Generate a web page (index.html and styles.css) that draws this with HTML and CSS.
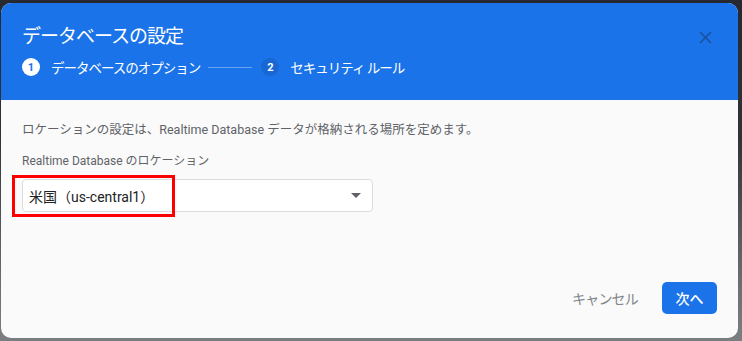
FILE: index.html
```html
<!doctype html>
<html lang="ja">

<head>
  <meta charset="utf-8">
  <meta name="viewport" content="width=device-width, initial-scale=1.0">
  <title>データベースの設定</title>
  <link rel="stylesheet" href="styles.css">
</head>

<body>
  <div class="backdrop-title">Realtime Database</div>

  <div class="dialog">
    <div class="header">
      <div class="title-row">
        <h1>データベースの設定</h1>
        <button class="close" aria-label="閉じる">
          <svg width="13" height="13" viewBox="0 0 13 13">
            <path d="M1 1 L12 12 M12 1 L1 12" stroke="#1a4f9c" stroke-width="1.5" fill="none"/>
          </svg>
        </button>
      </div>
      <div class="stepper">
        <span class="step-num active">1</span>
        <span class="step-label">データベースのオプション</span>
        <span class="step-line"></span>
        <span class="step-num">2</span>
        <span class="step-label">セキュリティ ルール</span>
      </div>
    </div>

    <div class="content">
      <p class="desc">ロケーションの設定は、Realtime Database データが格納される場所を定めます。</p>
      <label class="field-label">Realtime Database のロケーション</label>
      <div class="select">
        <span class="select-value">米国（us-central1）</span>
        <span class="arrow"></span>
        <span class="highlight"></span>
      </div>
    </div>

    <div class="actions">
      <button class="button flat">キャンセル</button>
      <button class="button primary">次へ</button>
    </div>
  </div>
</body>
</html>
```

FILE: styles.css
```css
html {
  font-family: Roboto, "Noto Sans CJK JP", sans-serif;
}

body {
  margin: 0;
  width: 742px;
  height: 341px;
  overflow: hidden;
  background: linear-gradient(#262a30 0, #2f3338 40%, #6e7174 85%, #7b7e81 100%);
  position: relative;
  padding: 3px 4px 3px 1px;
  box-sizing: border-box;
}

.backdrop-title {
  position: absolute;
  left: 138px;
  top: -33px;
  font-size: 36px;
  color: #9aa0a6;
  font-weight: 500;
}

.dialog {
  position: relative;
  height: 335px;
  background-color: #fafafa;
  border-radius: 10px;
  overflow: hidden;
  display: flex;
  flex-direction: column;
}

.header {
  background-color: #1a73e8;
  height: 97px;
  padding: 0 21px;
  box-sizing: border-box;
  color: white;
}

.title-row {
  display: flex;
  justify-content: space-between;
  align-items: center;
  padding-top: 21px;
}

h1 {
  font-size: 19px;
  font-weight: 400;
  letter-spacing: -1px;
  margin: 0;
  line-height: 26px;
}

.close {
  background: none;
  border: none;
  padding: 0;
  margin-right: 5px;
  display: flex;
  cursor: pointer;
}

.stepper {
  display: flex;
  align-items: center;
  margin-top: 7px;
  font-size: 13.5px;
  letter-spacing: -1px;
}

.step-num {
  width: 18px;
  height: 18px;
  border-radius: 50%;
  background-color: #1967d2;
  color: white;
  font-size: 11px;
  font-weight: 700;
  letter-spacing: 0;
  display: flex;
  align-items: center;
  justify-content: center;
  margin-right: 11px;
}

.step-num.active {
  background-color: white;
  color: #1a73e8;
}

.step-line {
  width: 44px;
  border-top: 1px solid #6aa2f0;
  margin: 0 9px 0 8px;
}

.content {
  flex: 1;
  padding: 21px 21px 0;
}

.desc {
  margin: 0;
  font-size: 12.5px;
  color: #5f6368;
  line-height: 18px;
}

.field-label {
  display: block;
  margin-top: 14px;
  font-size: 12px;
  color: #5f6368;
  line-height: 16px;
}

.select {
  position: relative;
  width: 351px;
  height: 33px;
  margin-top: 10px;
  box-sizing: border-box;
  background-color: white;
  border: 1px solid #dadce0;
  border-radius: 4px;
  display: flex;
  align-items: center;
  justify-content: space-between;
  padding: 0 11px 0 6px;
}

.select-value {
  font-size: 14px;
  color: #202124;
}

.arrow {
  width: 0;
  height: 0;
  border-left: 5px solid transparent;
  border-right: 5px solid transparent;
  border-top: 5px solid #5f6368;
}

.highlight {
  position: absolute;
  left: -11px;
  top: -5px;
  width: 163px;
  height: 42px;
  box-sizing: border-box;
  border: 3px solid #f00;
}

.actions {
  display: flex;
  justify-content: flex-end;
  align-items: center;
  padding: 0 21px 22px;
}

.button {
  border: none;
  border-radius: 5px;
  font-family: inherit;
  font-size: 14px;
  cursor: pointer;
}

.flat {
  background: none;
  color: #80868b;
  padding: 8px 0;
  margin-right: 24px;
  letter-spacing: -0.8px;
}

.primary {
  background-color: #1a73e8;
  color: white;
  width: 55px;
  height: 32px;
  font-weight: 500;
}
```
